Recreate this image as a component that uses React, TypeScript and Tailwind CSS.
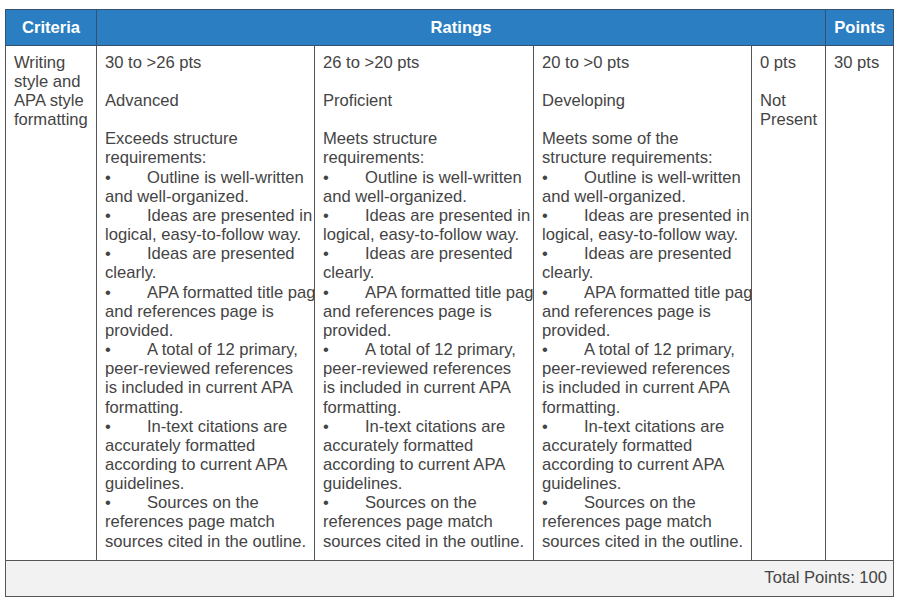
// each bullet: first line follows the bullet, the rest wrap back to the left edge
const bullets = [
  ["Outline is well-written", "and well-organized."],
  ["Ideas are presented in", "logical, easy-to-follow way."],
  ["Ideas are presented", "clearly."],
  ["APA formatted title page", "and references page is", "provided."],
  ["A total of 12 primary,", "peer-reviewed references", "is included in current APA", "formatting."],
  ["In-text citations are", "accurately formatted", "according to current APA", "guidelines."],
  ["Sources on the", "references page match", "sources cited in the outline."],
];

const ratings = [
  { pts: "30 to >26 pts", label: "Advanced", intro: ["Exceeds structure", "requirements:"] },
  { pts: "26 to >20 pts", label: "Proficient", intro: ["Meets structure", "requirements:"] },
  { pts: "20 to >0 pts", label: "Developing", intro: ["Meets some of the", "structure requirements:"] },
];

const RatingCell = ({ pts, label, intro }: { pts: string; label: string; intro: string[] }) => (
  <td className="border border-[#555] align-top pl-2 pr-0 pt-[7px] pb-[9px] overflow-hidden">
    <div className="flex flex-col gap-[19px]">
      <div>{pts}</div>
      <div>{label}</div>
      <div className="whitespace-nowrap">
        {intro.map((line) => (
          <div key={line}>{line}</div>
        ))}
        {bullets.map((lines, i) => (
          <div key={i}>
            {lines.map((line, j) => (
              <div key={j}>
                {j === 0 && <span className="inline-block w-[42px]">•</span>}
                {line}
              </div>
            ))}
          </div>
        ))}
      </div>
    </div>
  </td>
);

export default function App() {
  return (
    <div className="bg-white min-h-screen pt-[9px] pl-[5px] font-['Liberation_Sans',Arial,sans-serif] text-[16.6px] leading-[19.15px] text-[#444]">
      <table className="table-fixed border-collapse w-[888px]">
        <colgroup>
          <col className="w-[91px]" />
          <col className="w-[218px]" />
          <col className="w-[219px]" />
          <col className="w-[218px]" />
          <col className="w-[74px]" />
          <col className="w-[68px]" />
        </colgroup>
        <thead>
          <tr className="bg-[#2a7ec1] text-white font-bold h-[36px]">
            <th className="border border-[#34526f] text-center">Criteria</th>
            <th colSpan={4} className="border border-[#34526f] text-center">
              Ratings
            </th>
            <th className="border border-[#34526f] text-center">Points</th>
          </tr>
        </thead>
        <tbody>
          <tr>
            <td className="border border-[#555] align-top pl-2 pr-1 pt-[7px]">
              Writing style and APA style formatting
            </td>
            {ratings.map((r) => (
              <RatingCell key={r.pts} {...r} />
            ))}
            <td className="border border-[#555] align-top pl-2 pr-1 pt-[7px]">
              <div className="flex flex-col gap-[19px]">
                <div>0 pts</div>
                <div>Not Present</div>
              </div>
            </td>
            <td className="border border-[#555] align-top pl-2 pr-1 pt-[7px]">30 pts</td>
          </tr>
          <tr className="bg-[#f2f2f2] h-[36px]">
            <td colSpan={6} className="border border-[#555] text-right pr-[6px] pb-[1px]">
              Total Points: 100
            </td>
          </tr>
        </tbody>
      </table>
    </div>
  );
}
